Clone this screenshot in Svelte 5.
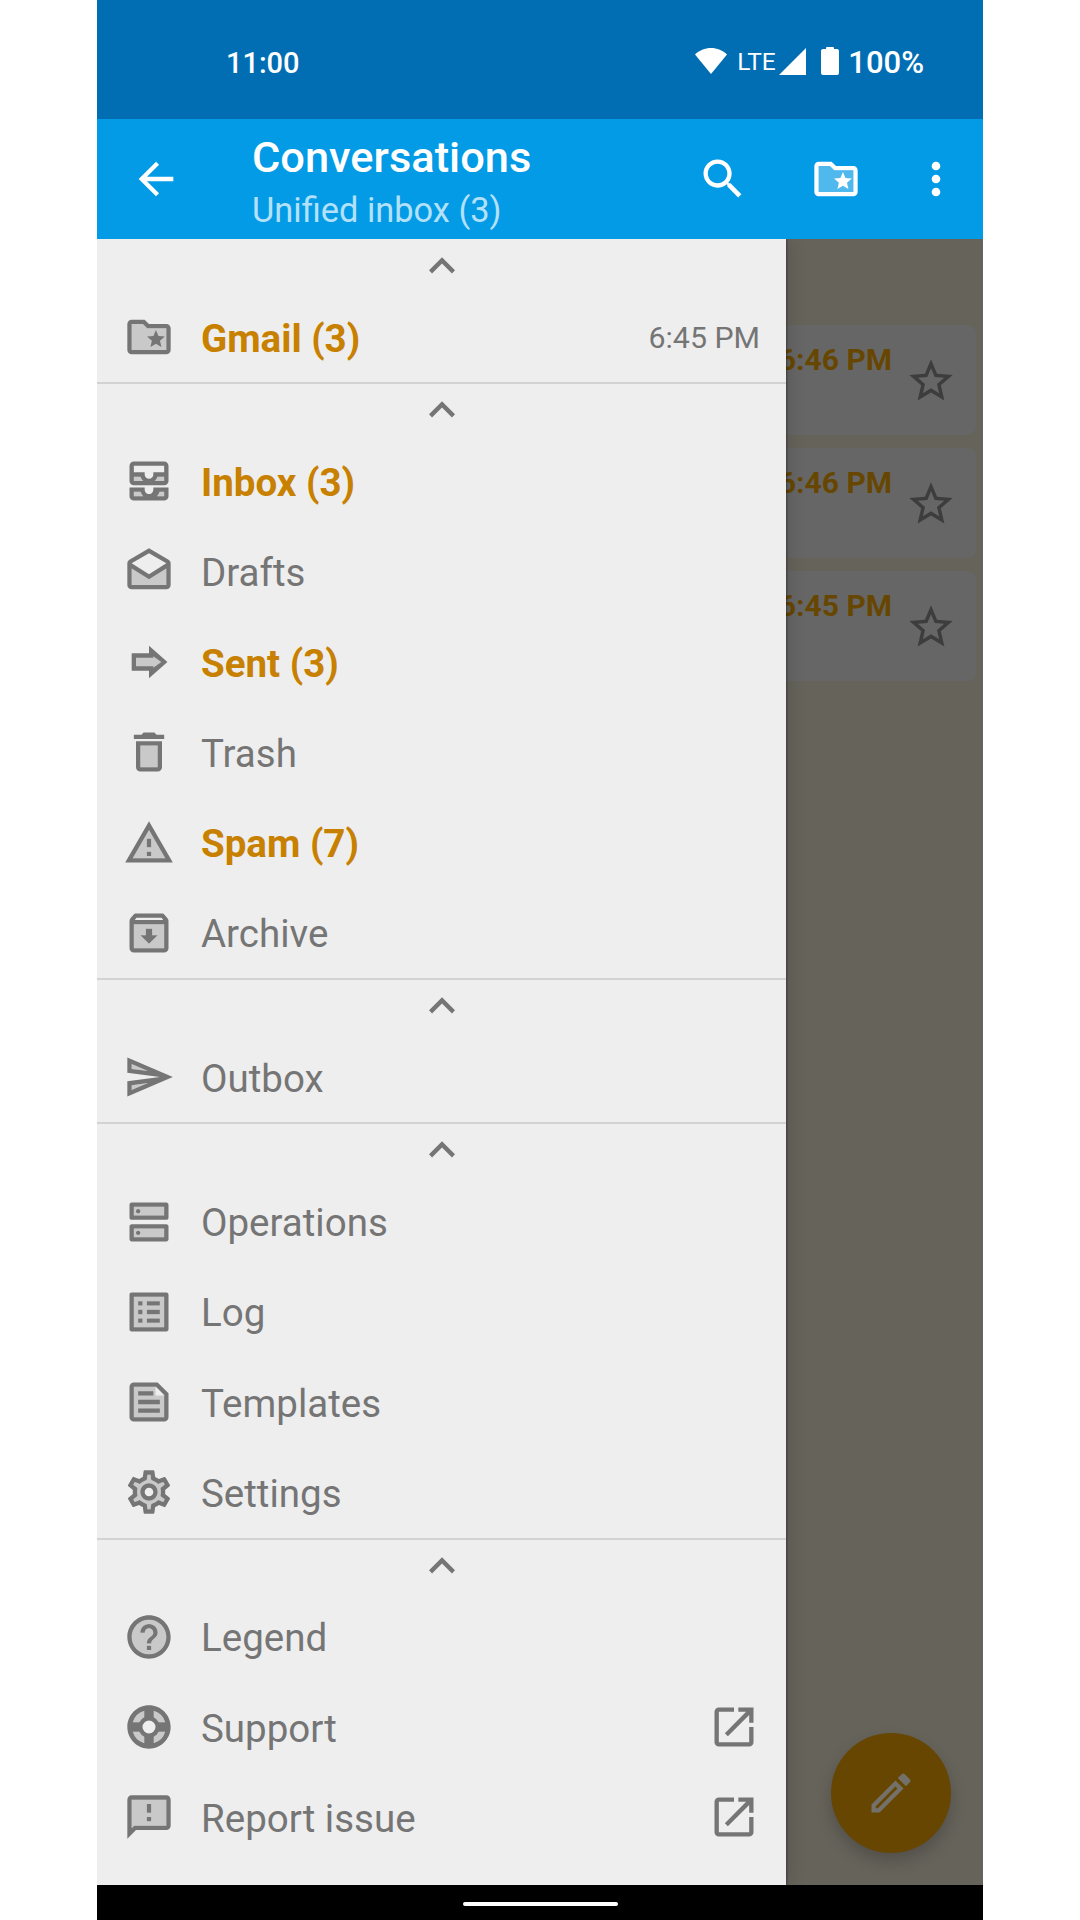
<script lang="ts">
	const folderStar = {
		tone: 'M11.170 8l-2-2H4v12h16V8h-8.830z',
		line: 'M20 6h-8l-2-2H4c-1.100 0-2 .9-2 2v12c0 1.100.9 2 2 2h16c1.100 0 2-.9 2-2V8c0-1.100-.9-2-2-2zm0 12H4V6h5.170l2 2H20v10zM15.200 8.800l-1.160 2.720-2.950.25 2.240 1.940-.67 2.880 2.540-1.490 2.540 1.490-.67-2.880 2.240-1.940-2.950-.25z'
	};

	const external = 'M19 19H5V5h7V3H5c-1.110 0-2 .9-2 2v14c0 1.100.89 2 2 2h14c1.100 0 2-.9 2-2v-7h-2v7zM14 3v2h3.590l-9.830 9.830 1.410 1.410L19 6.410V10h2V3h-7z';

	const icons = {
		inbox: {
			tone: 'M5 10h3.130c.21.78.67 1.470 1.270 2H5v-2zM19 12h-4.400c.6-.53 1.060-1.220 1.270-2H19v2zM16.870 17H19v2h-3.400c.6-.53 1.060-1.220 1.270-2zM8.130 17c.21.78.67 1.470 1.270 2H5v-2h3.130z',
			line: 'M19 3H5c-1.100 0-2 .9-2 2v7c0 1.100.9 2 2 2h14c1.100 0 2-.9 2-2V5c0-1.100-.9-2-2-2zM5 10h3.130c.21.78.67 1.470 1.270 2H5v-2zM19 12h-4.400c.6-.53 1.060-1.220 1.270-2H19v2zM19 8h-5v1c0 1.070-.93 2-2 2s-2-.93-2-2V8H5V5h14v3zM17 15h-3v1c0 .47-.19.9-.48 1.250-.37.45-.92.75-1.520.75s-1.150-.3-1.520-.75C10.190 16.900 10 16.470 10 16v-1H3v4c0 1.100.9 2 2 2h14c1.100 0 2-.9 2-2v-4h-4zM16.870 17H19v2h-3.400c.6-.53 1.060-1.220 1.270-2zM8.130 17c.21.78.67 1.470 1.270 2H5v-2h3.130z'
		},
		drafts: {
			tone: 'M4 18h16l-.01-7.630L12 15.360l-8-5.020z',
			line: 'M21.990 8c0-.72-.37-1.350-.94-1.700L12 1 2.950 6.300C2.380 6.650 2 7.280 2 8v10c0 1.100.9 2 2 2h16c1.100 0 2-.9 2-2l-.01-10zM12 3.320L19.990 8v.01L12 13 4 8l8-4.680zM4 18v-7.660l8 5.020 7.990-4.990L20 18H4z'
		},
		sent: {
			tone: 'M5 9.500h8.500V7l5 5-5 5v-2.500H5z',
			line: 'M12 4.500V8H4v8h8v3.500L20.500 12zM14 9.300 17.700 12 14 14.700V14H6v-4h8z'
		},
		trash: {
			tone: 'M8 9h8v10H8z',
			line: 'M16 9v10H8V9h8m-1.500-6h-5l-1 1H5v2h14V4h-3.500l-1-1zM18 7H6v12c0 1.100.9 2 2 2h8c1.100 0 2-.9 2-2V7z'
		},
		spam: {
			tone: 'M4.470 19h15.060L12 5.990 4.470 19zM13 18h-2v-2h2v2zm0-4h-2v-4h2v4z',
			line: 'M1 21h22L12 2 1 21zm3.470-2L12 5.990 19.530 19H4.470zM11 16h2v2h-2zm0-6h2v4h-2z'
		},
		archive: {
			tone: 'M5 19h14V8H5v11zm5.550-6v-3h2.900v3H16l-4 4-4-4h2.550z',
			line: 'M20.540 5.230l-1.390-1.680C18.880 3.210 18.470 3 18 3H6c-.47 0-.88.21-1.160.55L3.460 5.230C3.170 5.570 3 6.020 3 6.500V19c0 1.100.9 2 2 2h14c1.100 0 2-.9 2-2V6.500c0-.48-.17-.93-.46-1.270zM6.240 5h11.520l.83 1H5.420l.82-1zM5 19V8h14v11H5zm8.450-9h-2.900v3H8l4 4 4-4h-2.550z'
		},
		outbox: {
			tone: 'M4 8.250l7.510 1-7.500-3.220zm.01 9.720l7.500-3.220-7.510 1z',
			line: 'M4.010 6.030l7.510 3.220-7.520-1 .01-2.220m7.500 8.720L4 17.970v-2.220l7.510-1M2.010 3L2 10l15 2-15 2 .01 7L23 12 2.010 3z'
		},
		operations: {
			tone: 'M5 5h14v4H5zm0 10h14v4H5z',
			line: 'M19 15v4H5v-4h14m1-2H4c-.55 0-1 .45-1 1v6c0 .55.45 1 1 1h16c.55 0 1-.45 1-1v-6c0-.55-.45-1-1-1zM7 18c-.55 0-1-.45-1-1s.45-1 1-1 1 .45 1 1-.45 1-1 1zM19 5v4H5V5h14m1-2H4c-.55 0-1 .45-1 1v6c0 .55.45 1 1 1h16c.55 0 1-.45 1-1V4c0-.55-.45-1-1-1zM7 8c-.55 0-1-.45-1-1s.45-1 1-1 1 .45 1 1-.45 1-1 1z'
		},
		log: {
			tone: 'M5 5v14h14V5H5zm4 12H7v-2h2v2zm0-4H7v-2h2v2zm0-4H7V7h2v2zm8 8h-6v-2h6v2zm0-4h-6v-2h6v2zm0-4h-6V7h6v2z',
			line: 'M11 7h6v2h-6zm0 4h6v2h-6zm0 4h6v2h-6zM7 7h2v2H7zm0 4h2v2H7zm0 4h2v2H7zM20.100 3H3.900c-.5 0-.9.4-.9.9v16.200c0 .4.4.9.9.9h16.200c.4 0 .9-.5.9-.9V3.900c0-.5-.5-.9-.9-.9zM19 19H5V5h14v14z'
		},
		templates: {
			tone: 'M5 5h10v4h4v10H5z',
			line: 'M16 3H5c-1.100 0-2 .9-2 2v14c0 1.100.9 2 2 2h14c1.100 0 2-.9 2-2V8zM5 19V5h10.200L19 8.800V19zM7 7h7v2H7zm0 4h10v2H7zm0 4h10v2H7z'
		},
		settings: {
			tone: 'M19.280 8.600l-.7-1.210-1.270.51-1.060.43-.91-.7c-.39-.3-.8-.54-1.230-.71l-1.060-.43-.16-1.130L12.700 4h-1.390l-.19 1.350-.16 1.130-1.060.44c-.41.17-.82.41-1.250.73l-.9.68-1.040-.42-1.270-.52-.7 1.210 1.080.84.89.7-.14 1.130c-.03.3-.05.53-.05.73s.02.43.05.73l.14 1.130-.89.7-1.080.84.7 1.210 1.270-.51 1.060-.43.91.7c.39.3.8.54 1.230.71l1.060.43.16 1.130.19 1.360h1.390l.19-1.350.16-1.130 1.060-.43c.41-.17.82-.41 1.250-.73l.9-.68 1.040.42 1.270.51.7-1.210-1.080-.84-.89-.7.14-1.130c.04-.31.05-.52.05-.73 0-.21-.02-.43-.05-.73l-.14-1.130.89-.7 1.100-.84zM12 16c-2.210 0-4-1.790-4-4s1.790-4 4-4 4 1.790 4 4-1.790 4-4 4z',
			line: 'M19.430 12.980c.04-.32.07-.64.07-.98s-.03-.66-.07-.98l2.110-1.650c.19-.15.24-.42.12-.64l-2-3.460c-.12-.22-.39-.3-.61-.22l-2.490 1c-.52-.4-1.080-.73-1.690-.98l-.38-2.650C14.460 2.180 14.250 2 14 2h-4c-.25 0-.46.18-.49.42l-.38 2.650c-.61.25-1.170.59-1.690.98l-2.490-1c-.23-.09-.49 0-.61.22l-2 3.460c-.13.22-.07.49.12.64l2.110 1.650c-.04.32-.07.65-.07.98s.03.66.07.98l-2.110 1.650c-.19.15-.24.42-.12.64l2 3.460c.12.22.39.3.61.22l2.490-1c.52.4 1.080.73 1.690.98l.38 2.650c.03.24.24.42.49.42h4c.25 0 .46-.18.49-.42l.38-2.650c.61-.25 1.170-.59 1.690-.98l2.490 1c.23.09.49 0 .61-.22l2-3.460c.12-.22.07-.49-.12-.64l-2.110-1.650zm-1.980-1.710c.04.31.05.52.05.73 0 .21-.02.43-.05.73l-.14 1.130.89.7 1.080.84-.7 1.210-1.270-.51-1.040-.42-.9.68c-.43.32-.84.56-1.250.73l-1.060.43-.16 1.130-.2 1.350h-1.400l-.19-1.350-.16-1.130-1.060-.43c-.43-.18-.83-.41-1.230-.71l-.91-.7-1.060.43-1.270.51-.7-1.210 1.080-.84.89-.7-.14-1.130c-.03-.31-.05-.54-.05-.74s.02-.43.05-.73l.14-1.130-.89-.7-1.080-.84.7-1.210 1.270.51 1.040.42.9-.68c.43-.32.84-.56 1.250-.73l1.060-.43.16-1.130.2-1.350h1.390l.19 1.350.16 1.130 1.060.43c.43.18.83.41 1.230.71l.91.7 1.060-.43 1.270-.51.7 1.210-1.070.85-.89.7.14 1.130zM12 8c-2.210 0-4 1.790-4 4s1.790 4 4 4 4-1.790 4-4-1.790-4-4-4zm0 6c-1.100 0-2-.9-2-2s.9-2 2-2 2 .9 2 2-.9 2-2 2z'
		},
		legend: {
			tone: 'M12 4c-4.410 0-8 3.590-8 8s3.590 8 8 8 8-3.590 8-8-3.590-8-8-8zm1 14h-2v-2h2v2zm0-3h-2c0-3.250 3-3 3-5 0-1.100-.9-2-2-2s-2 .9-2 2H8c0-2.210 1.790-4 4-4s4 1.790 4 4c0 2.500-3 2.750-3 5z',
			line: 'M11 16h2v2h-2zm1-14C6.480 2 2 6.480 2 12s4.480 10 10 10 10-4.480 10-10S17.520 2 12 2zm0 18c-4.410 0-8-3.590-8-8s3.590-8 8-8 8 3.590 8 8-3.590 8-8 8zm0-14c-2.210 0-4 1.790-4 4h2c0-1.100.9-2 2-2s2 .9 2 2c0 2-3 1.750-3 5h2c0-2.250 3-2.500 3-5 0-2.210-1.790-4-4-4z'
		},
		support: {
			tone: 'M14.200 7.510V4.520A7.800 7.800 0 0 1 19.480 9.800H16.490A5 5 0 0 0 14.200 7.510zM9.800 7.510A5 5 0 0 0 7.510 9.800H4.520A7.800 7.800 0 0 1 9.800 4.520zM16.490 14.200H19.480A7.800 7.800 0 0 1 14.200 19.480V16.490A5 5 0 0 0 16.490 14.200zM9.800 16.490V19.480A7.800 7.800 0 0 1 4.520 14.200H7.510A5 5 0 0 0 9.800 16.490z',
			line: 'M12 2C6.480 2 2 6.480 2 12s4.480 10 10 10 10-4.480 10-10S17.520 2 12 2zM12 9a3 3 0 1 1 0 6 3 3 0 0 1 0-6zM14.200 7.510V4.520A7.800 7.800 0 0 1 19.480 9.800H16.490A5 5 0 0 0 14.200 7.510zM9.800 7.510A5 5 0 0 0 7.510 9.800H4.520A7.800 7.800 0 0 1 9.800 4.520zM16.490 14.200H19.480A7.800 7.800 0 0 1 14.200 19.480V16.490A5 5 0 0 0 16.490 14.200zM9.800 16.490V19.480A7.800 7.800 0 0 1 4.520 14.200H7.510A5 5 0 0 0 9.800 16.490z'
		},
		report: {
			tone: 'M5.170 16H20V4H4v13.170l.58-.58.59-.59zM11 6h2v4h-2V6zm0 6h2v2h-2v-2z',
			line: 'M20 2H4c-1.100 0-1.990.9-1.990 2L2 22l4-4h14c1.100 0 2-.9 2-2V4c0-1.100-.9-2-2-2zm0 14H5.170l-.59.59-.58.58V4h16v12zm-9-4h2v2h-2zm0-6h2v4h-2z'
		}
	};

	const sections = [
		[{ icon: folderStar, label: 'Gmail (3)', unread: true, time: '6:45 PM' }],
		[
			{ icon: icons.inbox, label: 'Inbox (3)', unread: true },
			{ icon: icons.drafts, label: 'Drafts' },
			{ icon: icons.sent, label: 'Sent (3)', unread: true },
			{ icon: icons.trash, label: 'Trash' },
			{ icon: icons.spam, label: 'Spam (7)', unread: true },
			{ icon: icons.archive, label: 'Archive' }
		],
		[{ icon: icons.outbox, label: 'Outbox' }],
		[
			{ icon: icons.operations, label: 'Operations' },
			{ icon: icons.log, label: 'Log' },
			{ icon: icons.templates, label: 'Templates' },
			{ icon: icons.settings, label: 'Settings' }
		],
		[
			{ icon: icons.legend, label: 'Legend' },
			{ icon: icons.support, label: 'Support', link: true },
			{ icon: icons.report, label: 'Report issue', link: true }
		]
	];

	const messages = ['6:46 PM', '6:46 PM', '6:45 PM'];
</script>

<div class="phone">
	<header class="status">
		<span class="clock">11:00</span>
		<div class="status-right">
			<svg class="wifi" viewBox="0 0 32 26"><path d="M16 26 0 6.500C4 2.500 10 0 16 0s12 2.500 16 6.500z" /></svg>
			<span class="lte">LTE</span>
			<svg class="signal" viewBox="0 0 27 27"><path d="M27 0v27H0z" /></svg>
			<svg class="battery" viewBox="0 0 18 28"><path d="M5 2V1a1 1 0 0 1 1-1h6a1 1 0 0 1 1 1v1h3a2 2 0 0 1 2 2v22a2 2 0 0 1-2 2H2a2 2 0 0 1-2-2V4a2 2 0 0 1 2-2z" /></svg>
			<span class="percent">100%</span>
		</div>
	</header>

	<div class="appbar">
		<svg class="icon white back" viewBox="0 0 24 24"><path d="M20 11H7.830l5.590-5.590L12 4l-8 8 8 8 1.410-1.410L7.830 13H20v-2z" /></svg>
		<div class="titles">
			<div class="title">Conversations</div>
			<div class="subtitle">Unified inbox (3)</div>
		</div>
		<svg class="icon white search" viewBox="0 0 24 24"><path d="M15.500 14h-.79l-.28-.27C15.410 12.590 16 11.110 16 9.500 16 5.910 13.090 3 9.500 3S3 5.910 3 9.500 5.910 16 9.500 16c1.610 0 3.090-.59 4.230-1.570l.27.28v.79l5 4.990L20.490 19l-4.990-5zm-6 0C7.010 14 5 11.990 5 9.500S7.010 5 9.500 5 14 7.010 14 9.500 11.990 14 9.500 14z" /></svg>
		<svg class="icon white folder" viewBox="0 0 24 24">
			<path class="tone" d={folderStar.tone} />
			<path d={folderStar.line} />
		</svg>
		<svg class="icon white more" viewBox="0 0 24 24"><path d="M12 8c1.100 0 2-.9 2-2s-.9-2-2-2-2 .9-2 2 .9 2 2 2zm0 2c-1.100 0-2 .9-2 2s.9 2 2 2 2-.9 2-2-.9-2-2-2zm0 6c-1.100 0-2 .9-2 2s.9 2 2 2 2-.9 2-2-.9-2-2-2z" /></svg>
	</div>

	<main class="content">
		<div class="messages">
			{#each messages as time}
				<div class="message">
					<span class="message-time">{time}</span>
					<svg class="star" viewBox="0 0 24 24"><path d="M22 9.240l-7.190-.62L12 2 9.190 8.630 2 9.240l5.460 4.730L5.820 21 12 17.270 18.180 21l-1.630-7.030L22 9.240zM12 15.400l-3.760 2.270 1-4.280-3.320-2.880 4.380-.38L12 6.100l1.710 4.040 4.380.38-3.320 2.880 1 4.280L12 15.400z" /></svg>
				</div>
			{/each}
		</div>

		<button class="fab" aria-label="Compose">
			<svg viewBox="0 0 24 24"><path d="M14.060 9.020l.92.92L5.920 19H5v-.92l9.060-9.060M17.660 3c-.25 0-.51.1-.7.29l-1.830 1.830 3.750 3.750 1.830-1.830c.39-.39.39-1.020 0-1.410l-2.340-2.340c-.2-.2-.45-.29-.71-.29zm-3.600 3.190L3 17.250V21h3.750L17.810 9.940l-3.750-3.750z" /></svg>
		</button>

		<nav class="drawer">
			{#each sections as rows}
				<section class="section">
					<div class="collapse">
						<svg class="chevron" viewBox="0 0 24 24"><path d="M12 8l-6 6 1.410 1.410L12 10.830l4.590 4.580L18 14z" /></svg>
					</div>
					{#each rows as row}
						<div class="row">
							<svg class="icon" viewBox="0 0 24 24">
								<path class="tone" d={row.icon.tone} />
								<path d={row.icon.line} />
							</svg>
							<span class="label" class:unread={row.unread}>{row.label}</span>
							{#if row.time}
								<span class="time">{row.time}</span>
							{/if}
							{#if row.link}
								<svg class="icon" viewBox="0 0 24 24"><path d={external} /></svg>
							{/if}
						</div>
					{/each}
				</section>
			{/each}
		</nav>
	</main>

	<footer class="navbar"><span class="pill"></span></footer>
</div>

<style>
	:global(body) {
		background: #fff;
	}

	.phone {
		width: 886px;
		height: 1920px;
		margin-left: 97px;
		display: flex;
		flex-direction: column;
		overflow: hidden;
		font-family: Roboto, 'Liberation Sans', sans-serif;
	}

	.status {
		height: 119px;
		flex: none;
		background: #016eb4;
		color: #fff;
		display: flex;
		align-items: center;
		justify-content: space-between;
		padding: 0 59px 0 129px;
		box-sizing: border-box;
	}

	.clock {
		font-size: 29px;
		font-weight: 500;
		line-height: 1;
		margin-top: 7px;
	}

	.status-right {
		display: flex;
		align-items: center;
		margin-top: 3px;
	}

	.status-right svg {
		fill: #fff;
		display: block;
	}

	.wifi {
		width: 32px;
		height: 26px;
	}

	.lte {
		font-size: 24.5px;
		width: 37px;
		margin: 0 5px 0 10px;
		white-space: nowrap;
	}

	.signal {
		width: 27px;
		height: 27px;
	}

	.battery {
		width: 18px;
		height: 28px;
		margin: 0 9px 0 15px;
	}

	.percent {
		font-size: 31px;
		font-weight: 500;
		margin-top: 2px;
	}

	.appbar {
		height: 120px;
		flex: none;
		background: #039be5;
		display: flex;
		align-items: center;
		position: relative;
		z-index: 2;
	}

	.icon {
		width: 52px;
		height: 52px;
		flex: none;
		fill: #757575;
		display: block;
	}

	.icon.white {
		fill: #fff;
	}

	.back {
		margin-left: 33px;
	}

	.titles {
		margin-left: 70px;
		padding-top: 6px;
		flex: 1;
	}

	.title {
		font-size: 43.4px;
		font-weight: 500;
		color: #fff;
		line-height: 52px;
	}

	.subtitle {
		font-size: 34.4px;
		color: #b3e1f9;
		line-height: 44px;
		margin-top: 4px;
	}

	.search {
		margin-right: 1px;
	}

	.folder {
		margin-left: 60px;
	}

	.more {
		margin: 0 21px 0 48px;
	}

	.tone {
		opacity: 0.3;
	}

	.content {
		flex: 1;
		background: #66635b;
		position: relative;
		min-height: 0;
	}

	.messages {
		display: flex;
		flex-direction: column;
		gap: 13px;
		padding: 86px 7px 0 0;
	}

	.message {
		height: 110px;
		background: #666666;
		border-radius: 8px;
		display: flex;
		justify-content: flex-end;
		align-items: flex-start;
		padding-right: 19px;
	}

	.message-time {
		font-size: 30px;
		font-weight: 700;
		color: #664600;
		line-height: 36px;
		margin: 17px 13px 0 0;
	}

	.star {
		width: 52px;
		height: 52px;
		fill: #3d3d3d;
		margin-top: 30px;
	}

	.fab {
		position: absolute;
		right: 32px;
		bottom: 32px;
		width: 120px;
		height: 120px;
		border: 0;
		padding: 0;
		border-radius: 50%;
		background: #664600;
		box-shadow: 0 8px 16px rgba(0, 0, 0, 0.2);
		display: flex;
		align-items: center;
		justify-content: center;
	}

	.fab svg {
		width: 52px;
		height: 52px;
		fill: #74706a;
	}

	.drawer {
		position: absolute;
		top: 0;
		left: 0;
		bottom: 0;
		width: 689px;
		background: #eeeeee;
		box-shadow: 1px 0 2px rgba(0, 0, 0, 0.35), 4px 0 16px rgba(0, 0, 0, 0.12);
	}

	.section + .section {
		border-top: 2px solid #d2d2d2;
	}

	.collapse {
		height: 53px;
		display: flex;
		align-items: center;
		justify-content: center;
	}

	.section + .section .collapse {
		height: 52px;
	}

	.chevron {
		width: 52px;
		height: 52px;
		fill: #757575;
	}

	.row {
		height: 90.3px;
		display: flex;
		align-items: center;
		padding: 0 26px;
	}

	.label {
		flex: 1;
		margin: 2px 0 0 26px;
		font-size: 38.5px;
		color: #757575;
	}

	.label.unread {
		font-weight: 700;
		color: #c78000;
	}

	.time {
		font-size: 30.3px;
		color: #757575;
	}

	.navbar {
		height: 35px;
		flex: none;
		background: #000;
		display: flex;
		justify-content: center;
		align-items: center;
	}

	.pill {
		width: 155px;
		height: 4px;
		border-radius: 2px;
		background: #fff;
		margin-top: 2px;
	}
</style>
